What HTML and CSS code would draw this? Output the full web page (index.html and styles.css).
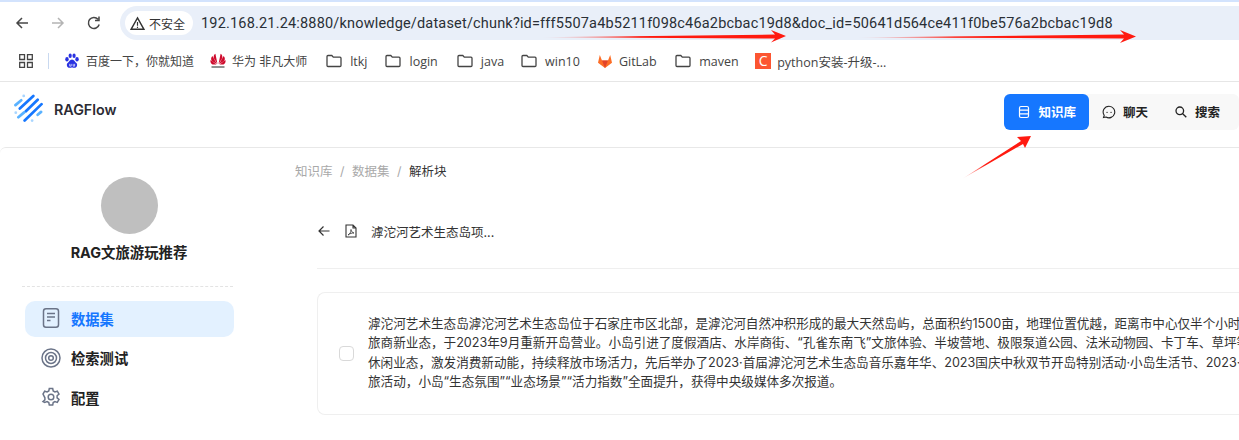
FILE: index.html
```html
<!DOCTYPE html>
<html lang="zh-CN">
<head>
    <meta charset="UTF-8">
    <title>RAGFlow</title>
    <link rel="stylesheet" href="styles.css">
</head>
<body>
    <div class="browser">
        <div class="toolbar">
            <svg class="nav-icon" viewBox="0 0 16 16"><path d="M14 8H3M8 3L3 8l5 5" fill="none" stroke="#474747" stroke-width="1.5"/></svg>
            <svg class="nav-icon" viewBox="0 0 16 16"><path d="M2 8h11M8 3l5 5-5 5" fill="none" stroke="#b4b4b4" stroke-width="1.5"/></svg>
            <svg class="nav-icon" viewBox="0 0 16 16"><path d="M13.2 9.5A5.5 5.5 0 1 1 12 4.2M13 1.5v4H9" fill="none" stroke="#474747" stroke-width="1.5"/></svg>
            <div class="omnibox">
                <div class="security">
                    <svg class="warn" viewBox="0 0 14 14"><path d="M7 1.8L13 12.4H1z" fill="none" stroke="#333" stroke-width="1.3"/><path d="M7 5.5v3.6M7 10v1.2" stroke="#333" stroke-width="1.1"/></svg>
                    不安全
                </div>
                <span class="url">192.168.21.24:8880/knowledge/dataset/chunk?id=fff5507a4b5211f098c46a2bcbac19d8&amp;doc_id=50641d564ce411f0be576a2bcbac19d8</span>
            </div>
        </div>
        <div class="bookmarks">
            <svg class="apps" viewBox="0 0 14 14"><path d="M.7.7h4.8v4.8H.7zM8.5.7h4.8v4.8H8.5zM.7 8.5h4.8v4.8H.7zM8.5 8.5h4.8v4.8H8.5z" fill="none" stroke="#444" stroke-width="1.3"/></svg>
            <span class="bm-sep"></span>
            <div class="bm bm-baidu">
                <svg class="bm-icon" viewBox="0 0 14 14" fill="#2932e1"><ellipse cx="2.6" cy="5.5" rx="1.5" ry="1.9"/><ellipse cx="5.4" cy="2.4" rx="1.4" ry="1.9"/><ellipse cx="8.8" cy="2.4" rx="1.4" ry="1.9"/><ellipse cx="11.400" cy="5.500" rx="1.5" ry="1.9"/><path d="M7 5.600c2 0 2.400 2 3.800 3.200 1.400 1.200.6 4.200-1.600 4.200-1 0-1.500-.4-2.200-.4s-1.200.4-2.200.4c-2.200 0-3-3-1.600-4.200C4.600 7.600 5 5.600 7 5.600z"/><path d="M5 9.500v2h1.300v-2M8 9.500v2h1.300v-2" fill="none" stroke="#fff" stroke-width=".6"/></svg>
                百度一下，你就知道
            </div>
            <div class="bm bm-huawei">
                <svg class="bm-icon" viewBox="0 0 16 16" fill="#cf0a2c"><path d="M7.500 11L5.400.8C3.800 1.500 3.200 3.800 4 5.600zM8.500 11L10.600.8c1.600.7 2.200 3 1.400 4.800zM7 11.200L2.400 3C.8 4.600.8 6.800 2 8zM9 11.200L13.600 3c1.600 1.600 1.600 3.800.4 5zM6.500 11.500L.5 7c-.4 2.200.5 3.800 2 4.500zM9.500 11.500l6-4.500c.4 2.200-.5 3.800-2 4.500z"/><rect x="1.500" y="13.200" width="13" height="1.600" fill="#777"/></svg>
                华为 非凡大师
            </div>
            <div class="bm bm-latin bm-ltkj">
                <svg class="folder" viewBox="0 0 16 14"><path d="M1 2.500c0-.6.400-1 1-1h3.800l1.500 1.700H14c.6 0 1 .4 1 1V11.500c0 .6-.4 1-1 1H2c-.6 0-1-.4-1-1z" fill="none" stroke="#444" stroke-width="1.300"/></svg>
                ltkj
            </div>
            <div class="bm bm-latin bm-login">
                <svg class="folder" viewBox="0 0 16 14"><path d="M1 2.500c0-.6.400-1 1-1h3.800l1.500 1.700H14c.6 0 1 .4 1 1V11.500c0 .6-.4 1-1 1H2c-.6 0-1-.4-1-1z" fill="none" stroke="#444" stroke-width="1.300"/></svg>
                login
            </div>
            <div class="bm bm-latin bm-java">
                <svg class="folder" viewBox="0 0 16 14"><path d="M1 2.500c0-.6.400-1 1-1h3.800l1.500 1.700H14c.6 0 1 .4 1 1V11.500c0 .6-.4 1-1 1H2c-.6 0-1-.4-1-1z" fill="none" stroke="#444" stroke-width="1.300"/></svg>
                java
            </div>
            <div class="bm bm-latin bm-win">
                <svg class="folder" viewBox="0 0 16 14"><path d="M1 2.500c0-.6.400-1 1-1h3.800l1.500 1.700H14c.6 0 1 .4 1 1V11.500c0 .6-.4 1-1 1H2c-.6 0-1-.4-1-1z" fill="none" stroke="#444" stroke-width="1.300"/></svg>
                win10
            </div>
            <div class="bm bm-latin bm-gitlab">
                <svg class="bm-icon" viewBox="0 0 16 15"><path d="M8 14.500L1 9.200 2.800 1.500 5 7h6l2.200-5.500L15 9.200z" fill="#fc6d26"/><path d="M8 14.500L5 7h6z" fill="#e24329"/></svg>
                GitLab
            </div>
            <div class="bm bm-latin bm-maven">
                <svg class="folder" viewBox="0 0 16 14"><path d="M1 2.500c0-.6.400-1 1-1h3.800l1.500 1.700H14c.6 0 1 .4 1 1V11.500c0 .6-.4 1-1 1H2c-.6 0-1-.4-1-1z" fill="none" stroke="#444" stroke-width="1.300"/></svg>
                maven
            </div>
            <div class="bm bm-latin">
                <span class="csdn">C</span>
                python安装-升级-...
            </div>
        </div>
    </div>

    <div class="app-header">
        <div class="logo">
            <svg class="logo-icon" viewBox="0 0 30 30">
                <g stroke-linecap="round" stroke-width="2.800" fill="none">
                    <path d="M6 15L20 2M12 18L24.500 6M11 27.500L28.500 10.500" stroke="#1677ff"/>
                    <path d="M1.500 11.500L7.500 6.500M4.500 24L10.500 19M24.500 21.500L28 18.500" stroke="#5ab2ff"/>
                    <path d="M10 2h.1M1.800 19.300h.1M18.700 27.500h.1" stroke="#a9d6ff"/>
                </g>
            </svg>
            <span>RAGFlow</span>
        </div>
        <div class="tabs">
            <div class="tab tab-active">
                <svg class="tab-icon" viewBox="0 0 14 14"><path d="M2.500 3c0-1 .8-1.500 1.500-1.500h6c.7 0 1.500.5 1.500 1.500v8c0 1-.8 1.500-1.500 1.500H4c-.7 0-1.500-.5-1.500-1.500zM2.500 5.200h9M2.500 8.800h9" fill="none" stroke="#fff" stroke-width="1.200"/></svg>
                知识库
            </div>
            <div class="tab">
                <svg class="tab-icon" viewBox="0 0 14 14"><path d="M7 1.200a5.800 5.800 0 1 1-3 10.800l-2.500.6.700-2.300A5.800 5.800 0 0 1 7 1.200z" fill="none" stroke="#222" stroke-width="1.100"/><path d="M5 7.300h.1M9 7.300h.1" stroke="#222" stroke-width="1.300" stroke-linecap="round"/></svg>
                聊天
            </div>
            <div class="tab">
                <svg class="tab-icon" viewBox="0 0 14 14"><circle cx="5.800" cy="5.800" r="3.800" fill="none" stroke="#222" stroke-width="1.300"/><path d="M8.700 8.700l3.600 3.600" stroke="#222" stroke-width="1.300"/></svg>
                搜索
            </div>
        </div>
    </div>

    <div class="main">
        <div class="sidebar">
            <div class="profile">
                <div class="avatar"></div>
                <div class="kb-name">RAG文旅游玩推荐</div>
            </div>
            <div class="menu">
                <div class="menu-item menu-active">
                    <svg class="menu-icon" viewBox="0 0 20 20"><rect x="2.500" y=".8" width="15" height="18.400" rx="2.500" fill="none" stroke="#6b7488" stroke-width="1.500"/><path d="M6 5.500h8M6 9h8M6 12.500h3.500" stroke="#6b7488" stroke-width="1.500"/></svg>
                    数据集
                </div>
                <div class="menu-item">
                    <svg class="menu-icon" viewBox="0 0 20 20" fill="none" stroke="#6b7488" stroke-width="1.500"><circle cx="10" cy="10" r="9"/><circle cx="10" cy="10" r="5.500"/><circle cx="10" cy="10" r="2.300"/></svg>
                    检索测试
                </div>
                <div class="menu-item">
                    <svg class="menu-icon" viewBox="0 0 20 20" fill="none" stroke="#6b7488" stroke-width="1.500"><path d="M8.300 1.500h3.400l.5 2.500 1.700 1 2.400-.8 1.700 2.900-1.900 1.700v2l1.900 1.700-1.700 2.900-2.400-.8-1.700 1-.5 2.500H8.300l-.5-2.500-1.700-1-2.400.8L2 14.500l1.900-1.700v-2L2 7.100l1.700-2.900 2.400.8 1.700-1z"/><circle cx="10" cy="10" r="2.800"/></svg>
                    配置
                </div>
            </div>
        </div>

        <div class="content">
            <div class="crumbs">
                <span>知识库</span><span class="slash">/</span><span>数据集</span><span class="slash">/</span><span class="crumb-current">解析块</span>
            </div>
            <div class="doc-head">
                <svg class="back" viewBox="0 0 14 14"><path d="M12.500 7H2M6.500 2.500L2 7l4.500 4.500" fill="none" stroke="#333" stroke-width="1.200"/></svg>
                <svg class="pdf" viewBox="0 0 12 14"><path d="M1 1h7l3 3v9H1zM8 1v3h3" fill="none" stroke="#333" stroke-width="1.100"/><path d="M3 11c2-1 3-3 3-5.500.3 2 1.200 3 3 3.500-2-.2-4 .5-6 2z" fill="none" stroke="#333" stroke-width=".8"/></svg>
                <span>滹沱河艺术生态岛项...</span>
            </div>
            <div class="chunk-card">
                <span class="check"></span>
                <div class="chunk-text">
                    <div>滹沱河艺术生态岛滹沱河艺术生态岛位于石家庄市区北部，是滹沱河自然冲积形成的最大天然岛屿，总面积约1500亩，地理位置优越，距离市中心仅半个小时</div>
                    <div>旅商新业态，于2023年9月重新开岛营业。小岛引进了度假酒店、水岸商街、“孔雀东南飞”文旅体验、半坡营地、极限泵道公园、法米动物园、卡丁车、草坪等</div>
                    <div>休闲业态，激发消费新动能，持续释放市场活力，先后举办了2023·首届滹沱河艺术生态岛音乐嘉年华、2023国庆中秋双节开岛特别活动·小岛生活节、2023·</div>
                    <div>旅活动，小岛“生态氛围”“业态场景”“活力指数”全面提升，获得中央级媒体多次报道。</div>
                </div>
            </div>
        </div>
    </div>

    <!-- red annotation arrows drawn over the screenshot -->
    <svg class="annotations" viewBox="0 0 1239 440">
        <defs>
            <linearGradient id="fade1" gradientUnits="userSpaceOnUse" x1="540" y1="0" x2="640" y2="0">
                <stop offset="0" stop-color="#ff1a10" stop-opacity="0"/>
                <stop offset="1" stop-color="#ff1a10"/>
            </linearGradient>
            <linearGradient id="fade2" gradientUnits="userSpaceOnUse" x1="855" y1="0" x2="955" y2="0">
                <stop offset="0" stop-color="#ff1a10" stop-opacity="0"/>
                <stop offset="1" stop-color="#ff1a10"/>
            </linearGradient>
            <linearGradient id="fade3" gradientUnits="userSpaceOnUse" x1="962" y1="179" x2="985" y2="164">
                <stop offset="0" stop-color="#ff1a10" stop-opacity="0"/>
                <stop offset="1" stop-color="#ff1a10"/>
            </linearGradient>
        </defs>
        <path d="M540 37.200L775 34.500 771 30 786 36 771 42.500 775 38.500z" fill="url(#fade1)"/>
        <path d="M855 37.500L1124 34.500 1120 30 1136 36.500 1120 43 1124 38.500z" fill="url(#fade2)"/>
        <path d="M962 179L1021 141 1017 137 1031 136 1025 148 1023 144z" fill="url(#fade3)"/>
    </svg>
</body>
</html>
```

FILE: styles.css
```css
:root {
    --primary: #1677ff;
    --line: #e8e8e8;
    --text: #1f1f1f;
}

html, body {
    height: 100%;
}

body {
    margin: 0;
    overflow: hidden;
    position: relative;
    background: #fff;
    color: var(--text);
    font-family: Inter, "Noto Sans CJK SC", sans-serif;
}

.browser {
    height: 82px;
    box-sizing: border-box;
    border-top: 2px solid #d3e3fd;
    border-bottom: 1px solid #e6e6e6;
}

.toolbar {
    height: 39px;
    display: flex;
    align-items: center;
    box-sizing: border-box;
    padding: 3px 0 0 14px;
}

.nav-icon {
    width: 16px;
    height: 16px;
    margin-right: 20px;
}

.omnibox {
    flex: 1;
    height: 34px;
    margin-left: -2px;
    padding-left: 5px;
    display: flex;
    align-items: center;
    background: #e9eff9;
    border-radius: 17px 0 0 17px;
    overflow: hidden;
}

.security {
    height: 24px;
    display: flex;
    align-items: center;
    gap: 4px;
    padding: 0 8px 0 5px;
    background: #fff;
    border-radius: 12px;
    font-size: 12px;
    color: #333;
    font-family: "Noto Sans CJK SC", sans-serif;
}

.warn {
    width: 15px;
    height: 15px;
}

.url {
    margin-left: 8px;
    font-size: 14.5px;
    letter-spacing: 0.18px;
    color: #2a2f36;
    white-space: nowrap;
    font-family: Roboto, sans-serif;
}

.bookmarks {
    height: 39px;
    display: flex;
    align-items: center;
    box-sizing: border-box;
    padding: 1px 0 0 19px;
    font-size: 12px;
    color: #444;
    font-family: "Open Sans", "Noto Sans CJK SC", sans-serif;
}

.apps {
    width: 14px;
    height: 14px;
}

.bm-sep {
    width: 1px;
    height: 16px;
    background: #c9d9f0;
    margin: 0 15px 0 15px;
}

.bm {
    display: flex;
    align-items: center;
    gap: 6px;
    white-space: nowrap;
}

.bm-latin { font-size: 12.5px; }

.bm-baidu { margin-right: 16px; }
.bm-huawei { margin-right: 19px; }
.bm-ltkj { margin-right: 18px; }
.bm-login { margin-right: 19px; }
.bm-java { margin-right: 17px; }
.bm-win { margin-right: 17px; }
.bm-gitlab { margin-right: 18.500px; }
.bm-maven { margin-right: 16.500px; }

.bm-icon {
    width: 16px;
    height: 16px;
}

.folder {
    width: 16px;
    height: 14px;
    margin-right: 2px;
}

.csdn {
    width: 16px;
    height: 16px;
    background: #fc5531;
    color: #fff;
    font-size: 14px;
    line-height: 16px;
    text-align: center;
}

.app-header {
    height: 65px;
    box-sizing: border-box;
    display: flex;
    justify-content: space-between;
    align-items: flex-start;
    padding: 12px 6px 0 14px;
}

.logo {
    display: flex;
    align-items: center;
    gap: 11px;
    font-size: 14.300px;
    font-weight: 600;
    color: #2b2b33;
}

.logo span {
    margin-top: 2px;
}

.logo-icon {
    width: 29px;
    height: 29px;
}

.tabs {
    display: flex;
    position: relative;
    background: #f8f8f8;
    border-radius: 6px;
    box-shadow: 6px 0 0 #f8f8f8;
}

.tab {
    height: 36px;
    box-sizing: border-box;
    display: flex;
    align-items: center;
    gap: 7px;
    padding: 0 13px 1px;
    font-size: 12.5px;
    font-weight: 700;
    color: #222;
}

.tab-active {
    background: var(--primary);
    color: #fff;
    border-radius: 6px;
}

.tab-icon {
    width: 14px;
    height: 14px;
}

.main {
    display: flex;
    height: 293px;
    border-top: 1px solid var(--line);
    border-top-left-radius: 6px;
}

.sidebar {
    width: 295px;
    flex: none;
    box-sizing: border-box;
    padding: 29px 62px 0 22px;
}

.profile {
    display: flex;
    flex-direction: column;
    align-items: center;
    gap: 7px;
    height: 109px;
    padding-left: 3px;
    border-bottom: 1px dashed #e3e3e3;
}

.avatar {
    width: 57px;
    height: 57px;
    border-radius: 50%;
    background: #bfbfbf;
}

.kb-name {
    font-size: 14.4px;
    font-weight: 700;
    color: #222;
}

.menu {
    margin-top: 14px;
    margin-left: 3px;
    margin-right: -1px;
}

.menu-item {
    height: 36px;
    box-sizing: border-box;
    padding: 0 0 2px 16px;
    margin-bottom: 3.500px;
    display: flex;
    align-items: center;
    gap: 10px;
    font-size: 14.3px;
    font-weight: 700;
    color: #222;
    border-radius: 10px;
}

.menu-active {
    background: #e3f1ff;
    color: var(--primary);
}

.menu-icon {
    width: 20px;
    height: 20px;
}

.content {
    flex: 1;
    min-width: 0;
    overflow: hidden;
}

.crumbs {
    margin-top: 15px;
    font-size: 12.5px;
    color: #a9a9a9;
    height: 18px;
    line-height: 18px;
}

.slash {
    margin: 0 7.500px;
}

.crumb-current {
    color: #333;
}

.doc-head {
    margin: 38px 0 0 22px;
    height: 50px;
    box-sizing: border-box;
    padding-bottom: 25px;
    display: flex;
    align-items: center;
    font-size: 12.5px;
    color: #333;
    border-bottom: 1px solid #efefef;
}

.back {
    width: 14px;
    height: 14px;
    margin-right: 14px;
}

.pdf {
    width: 12px;
    height: 14px;
    margin-right: 14px;
}

.chunk-card {
    margin: 23px 0 0 22px;
    height: 123px;
    box-sizing: border-box;
    border: 1px solid #efefef;
    border-right: none;
    border-radius: 8px 0 0 8px;
    display: flex;
    align-items: center;
    padding-left: 21px;
    overflow: hidden;
}

.check {
    width: 15px;
    height: 15px;
    box-sizing: border-box;
    flex: none;
    border: 1px solid #d9d9d9;
    border-radius: 4px;
    margin-right: 14px;
}

.chunk-text {
    font-size: 12.6px;
    line-height: 19.500px;
    color: #333;
    white-space: nowrap;
    margin-top: -2px;
}

.annotations {
    position: absolute;
    left: 0;
    top: 0;
    width: 1239px;
    height: 440px;
    pointer-events: none;
}
```
